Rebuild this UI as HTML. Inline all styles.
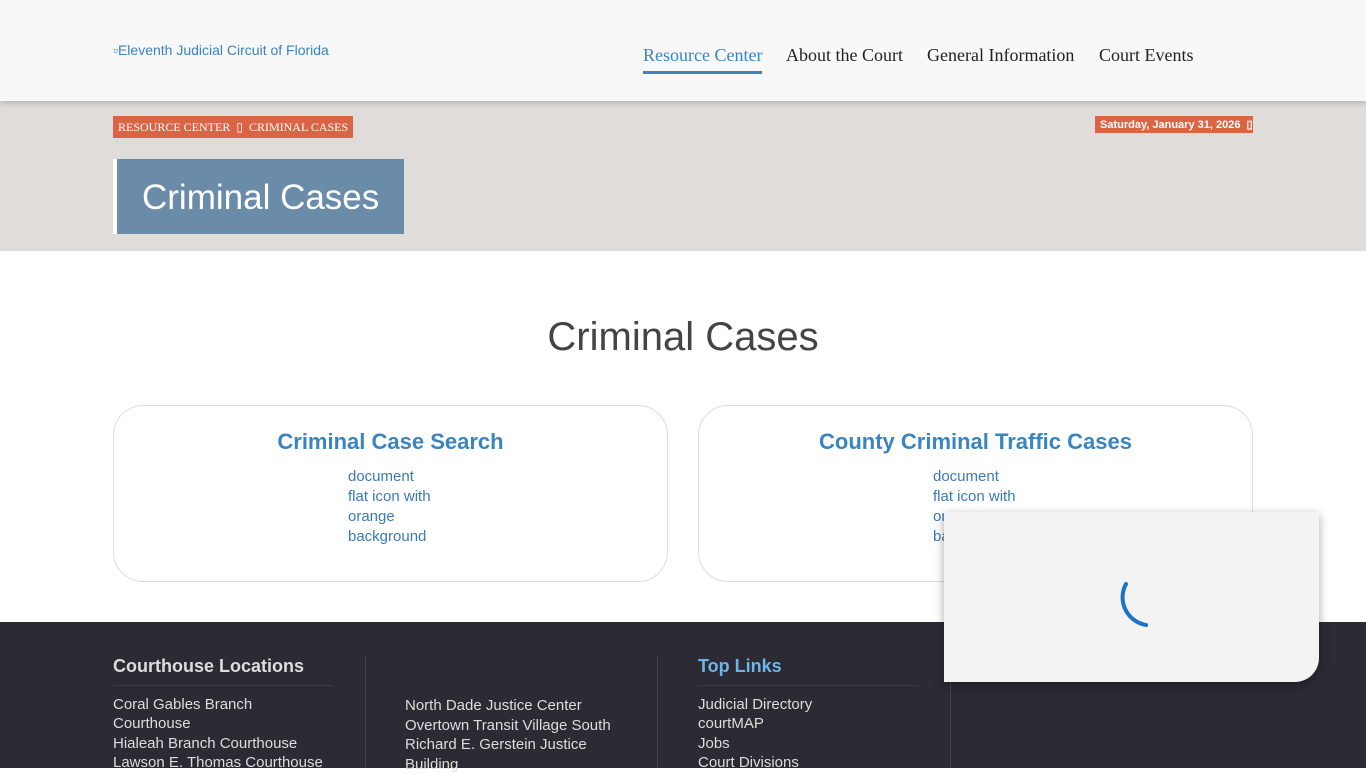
<!DOCTYPE html>
<html><head><style>
*{margin:0;padding:0;box-sizing:border-box}
body{width:1366px;height:768px;overflow:hidden;font-family:"Liberation Sans",sans-serif;background:#fff;position:relative}
.hdr{position:absolute;top:0;left:0;width:1366px;height:101px;background:#f8f8f8;box-shadow:0 2px 6px rgba(0,0,0,.2);z-index:2}
.logo{position:absolute;left:113px;top:42px;font-size:14px;color:#3a84c0}
.nav{position:absolute;top:45px;font-family:"Liberation Serif",serif;font-size:18px;color:#222}
.band{position:absolute;top:101px;left:0;width:1366px;height:150px;background:#dfdcda}
.crumb{position:absolute;left:113px;top:116px;height:22px;background:#dc6446;color:#fff;font-family:"Liberation Serif",serif;font-size:12px;line-height:22px;padding:0 5px}
.date{position:absolute;left:1095px;top:116px;height:17px;width:158px;background:#dc6446;color:#fff;font-size:11px;font-weight:bold;line-height:18px;padding-left:5px}
.title{position:absolute;left:113px;top:159px;width:291px;height:75px;background:#6a8ca8;border-left:4px solid #fff;color:#fff;font-size:35px;line-height:77px;padding-left:25px}
h1{position:absolute;top:315px;width:1366px;text-align:center;font-weight:normal;font-size:40px;color:#444}
.card{position:absolute;top:405px;width:555px;height:177px;border:1px solid #ddd;border-radius:30px}
.card h2{text-align:center;color:#3a84c0;font-size:22px;margin-top:23px}
.card p{position:absolute;top:61px;width:88px;font-size:15px;line-height:20px;color:#3a7ab5}
.foot{position:absolute;top:622px;left:0;width:1366px;height:146px;background:#2c2a33}
.col{position:absolute;top:35px;color:#ddd;font-size:15px;line-height:19.5px}
.col h3{font-size:18px;padding-bottom:8px;border-bottom:1px solid #3e3c46;width:220px;margin-bottom:9px}
.div{position:absolute;top:35px;width:1px;height:111px;background:#45434d}
.pop{position:absolute;left:944px;top:512px;width:375px;height:170px;background:#f3f3f3;border-radius:0 0 24px 0;box-shadow:0 3px 10px rgba(0,0,0,.35);z-index:3}
</style></head><body>
<div class="hdr">
<div class="logo">▫Eleventh Judicial Circuit of Florida</div>
<div class="nav" style="left:643px;color:#3a84c0">Resource Center<div style="height:3px;background:#3a84c0;margin-top:5px"></div></div>
<div class="nav" style="left:786px">About the Court</div>
<div class="nav" style="left:927px">General Information</div>
<div class="nav" style="left:1099px">Court Events</div>
</div>
<div class="band"></div>
<div class="crumb">RESOURCE CENTER &nbsp;▯&nbsp; CRIMINAL CASES</div>
<div class="date">Saturday, January 31, 2026 &nbsp;▯</div>
<div class="title">Criminal Cases</div>
<h1>Criminal Cases</h1>
<div class="card" style="left:113px"><h2>Criminal Case Search</h2><p style="left:234px">document flat icon with orange background</p></div>
<div class="card" style="left:698px"><h2>County Criminal Traffic Cases</h2><p style="left:234px">document flat icon with orange background</p></div>
<div class="foot">
<div class="col" style="left:113px"><h3>Courthouse Locations</h3>Coral Gables Branch<br>Courthouse<br>Hialeah Branch Courthouse<br>Lawson E. Thomas Courthouse</div>
<div class="div" style="left:365px"></div>
<div class="col" style="left:405px"><h3 style="border:none;height:28px;margin-bottom:11px"></h3>North Dade Justice Center<br>Overtown Transit Village South<br>Richard E. Gerstein Justice<br>Building</div>
<div class="div" style="left:657px"></div>
<div class="col" style="left:698px"><h3 style="color:#6cb4ea">Top Links</h3>Judicial Directory<br>courtMAP<br>Jobs<br>Court Divisions</div>
<div class="div" style="left:950px"></div>
</div>
<div class="pop"><svg width="375" height="170"><path d="M182 72 A28 28 0 0 0 202 113" fill="none" stroke="#1a73c8" stroke-width="4" stroke-linecap="round"/></svg></div>
</body></html>
